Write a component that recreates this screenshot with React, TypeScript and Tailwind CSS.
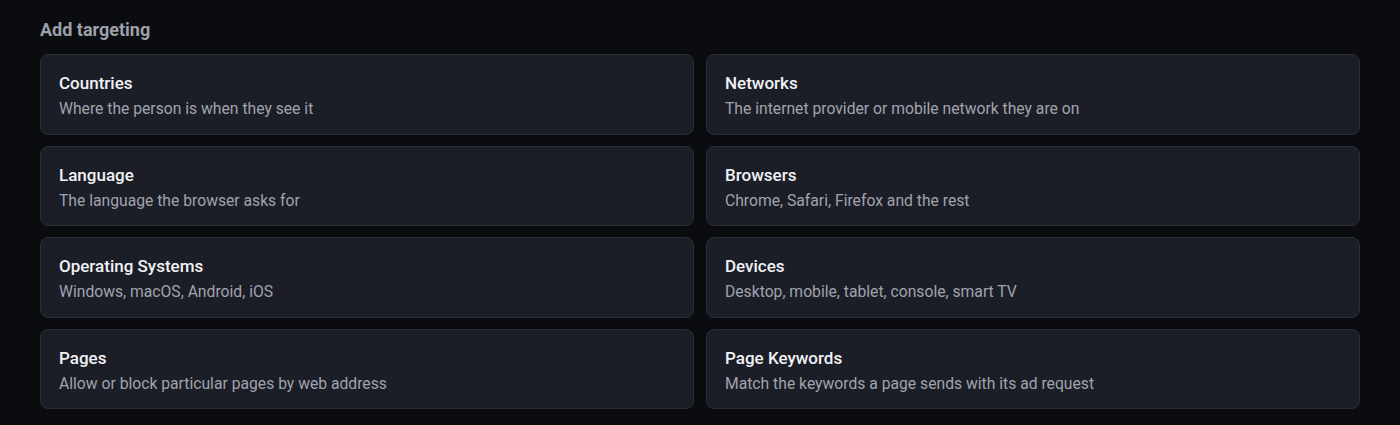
const options = [
  { title: "Countries", desc: "Where the person is when they see it" },
  { title: "Networks", desc: "The internet provider or mobile network they are on" },
  { title: "Language", desc: "The language the browser asks for" },
  { title: "Browsers", desc: "Chrome, Safari, Firefox and the rest" },
  { title: "Operating Systems", desc: "Windows, macOS, Android, iOS" },
  { title: "Devices", desc: "Desktop, mobile, tablet, console, smart TV" },
  { title: "Pages", desc: "Allow or block particular pages by web address" },
  { title: "Page Keywords", desc: "Match the keywords a page sends with its ad request" },
];

export default function App() {
  return (
    <div className="min-h-[425px] bg-[#0b0c10] px-10 pt-[18px] font-['Roboto',sans-serif]">
      <h2 className="text-lg font-bold leading-6 text-[#9ca0aa]">Add targeting</h2>
      <div className="mt-3 grid grid-cols-2 gap-x-3 gap-y-[11px]">
        {options.map((o) => (
          <div
            key={o.title}
            role="button"
            className="h-[80.5px] cursor-pointer rounded-lg border border-[#2a2d37] bg-[#1c1e27] px-[18px] pt-[17px]"
          >
            <div className="text-[17px] font-medium leading-[22px] text-[#f1f2f5]">{o.title}</div>
            <div className="mt-1 text-[15.7px] leading-[22px] text-[#a0a3ad]">{o.desc}</div>
          </div>
        ))}
      </div>
    </div>
  );
}
